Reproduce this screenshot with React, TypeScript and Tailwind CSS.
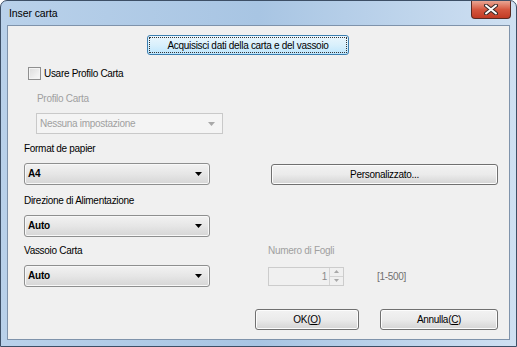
import React from "react";

const font = { fontFamily: '"Liberation Sans", Arial, sans-serif' };

function Arrow({ disabled }: { disabled?: boolean }) {
  return (
    <svg width="7" height="4" viewBox="0 0 7 4">
      <path d="M0 0 H7 L3.5 4 Z" fill={disabled ? "#a8a8a8" : "#000000"} />
    </svg>
  );
}

function Combo({ value }: { value: string }) {
  return (
    <div className="flex h-[22px] w-[186px] items-center justify-between rounded-[3px] border border-[#8e8f8f] bg-gradient-to-b from-[#f2f2f2] via-[#e6e6e6] to-[#d6d6d6] pl-[3px] pr-[7px] shadow-[inset_0_0_0_1px_#f8f8f8]">
      <span className="text-[10px] font-bold leading-none tracking-[-0.2px] text-black">{value}</span>
      <Arrow />
    </div>
  );
}

function Button({ children, width }: { children: React.ReactNode; width: string }) {
  return (
    <div
      className={`flex h-[21px] items-center justify-center rounded-[3px] border border-[#707070] bg-gradient-to-b from-[#f2f2f2] via-[#ebebeb] to-[#d4d4d4] text-black shadow-[inset_0_0_0_1px_#fcfcfc] ${width}`}
    >
      {children}
    </div>
  );
}

export default function App() {
  return (
    <div style={font} className="flex h-[347px] w-[517px] flex-col overflow-hidden rounded-t-[7px] border border-[#3d4f66] bg-gradient-to-r from-[#b9d1ea] via-[#a8c5e3] to-[#cfe0f2] px-[6px] pb-[6px]">
      {/* Title bar */}
      <div className="flex h-[24px] shrink-0 items-start justify-between">
        <span className="pl-[2px] pt-[6px] text-[10.5px] leading-[13px] tracking-[-0.1px] text-black">Inser carta</span>
        <div className="mr-[-1px] flex h-[18px] w-[40px] items-center justify-center rounded-b-[4px] border border-t-0 border-[#5a2a22] bg-gradient-to-b from-[#e8a593] via-[#d5573f] to-[#c13a24]">
          <svg width="14" height="11" viewBox="0 0 14 11">
            <path d="M2 1.5 L12 9.5 M12 1.5 L2 9.5" stroke="#3a2a28" strokeWidth="4" strokeLinecap="round" />
            <path d="M2 1.5 L12 9.5 M12 1.5 L2 9.5" stroke="#ffffff" strokeWidth="2" strokeLinecap="round" />
          </svg>
        </div>
      </div>

      {/* Client area */}
      <div className="flex flex-1 flex-col border border-[#7f93ab] bg-[#f0f0f0] text-[10px] leading-[13px] tracking-[-0.3px] text-black">
        <div className="ml-[139px] mt-[9px] flex h-[20px] w-[202px] items-center justify-center rounded-[3px] border border-[#3c7fb1] bg-gradient-to-b from-[#eaf6fd] via-[#d9f0fc] to-[#bee6fd] p-[2px]">
          <div className="flex h-full w-full items-center justify-center outline-1 outline-dotted outline-[#333]">
            Acquisisci dati della carta e del vassoio
          </div>
        </div>

        <div className="ml-[20px] mt-[12px] flex items-center gap-[3px]">
          <div className="h-[13px] w-[13px] border border-[#8f8f8f] bg-gradient-to-br from-[#dcdcdc] to-[#fafafa] shadow-[inset_0_0_0_1px_#f4f4f4]" />
          <span>Usare Profilo Carta</span>
        </div>

        <div className="ml-[29px] mt-[12px] text-[#a0a0a0]">Profilo Carta</div>
        <div className="ml-[28px] mt-[8px] flex h-[21px] w-[187px] items-center justify-between border border-[#c9c9c9] bg-[#f4f4f4] pl-[3px] pr-[7px]">
          <span className="text-[#a0a0a0]">Nessuna impostazione</span>
          <Arrow disabled />
        </div>

        <div className="ml-[16px] mt-[8px]">Format de papier</div>
        <div className="ml-[16px] mt-[8px] flex items-center">
          <Combo value="A4" />
          <div className="ml-[61px]">
            <Button width="w-[227px]">Personalizzato...</Button>
          </div>
        </div>

        <div className="ml-[16px] mt-[9px]">Direzione di Alimentazione</div>
        <div className="ml-[16px] mt-[8px]">
          <Combo value="Auto" />
        </div>

        <div className="ml-[16px] mt-[7px] flex">
          <span className="w-[244px]">Vassoio Carta</span>
          <span className="text-[#a0a0a0]">Numero di Fogli</span>
        </div>
        <div className="ml-[16px] mt-[8px] flex items-center">
          <Combo value="Auto" />
          <div className="ml-[58px] flex h-[19px] w-[76px] items-center border border-[#cccccc] bg-[#f0f0f0]">
            <span className="flex-1 pr-[2px] text-right text-[#8a8a8a]">1</span>
            <div className="flex h-full w-[14px] flex-col border-l border-[#d4d4d4]">
              <div className="flex flex-1 items-center justify-center border-b border-[#d4d4d4]">
                <svg width="5" height="3" viewBox="0 0 5 3"><path d="M0 3 L2.5 0 L5 3 Z" fill="#a8a8a8" /></svg>
              </div>
              <div className="flex flex-1 items-center justify-center">
                <svg width="5" height="3" viewBox="0 0 5 3"><path d="M0 0 L2.5 3 L5 0 Z" fill="#a8a8a8" /></svg>
              </div>
            </div>
          </div>
          <span className="ml-[33px] text-[#707070]">[1-500]</span>
        </div>

        <div className="ml-[247px] mt-[22px] flex gap-[21px]">
          <Button width="w-[104px]">
            <span>
              OK(<span className="underline">O</span>)
            </span>
          </Button>
          <Button width="w-[118px]">
            <span>
              Annulla(<span className="underline">C</span>)
            </span>
          </Button>
        </div>
      </div>
    </div>
  );
}
